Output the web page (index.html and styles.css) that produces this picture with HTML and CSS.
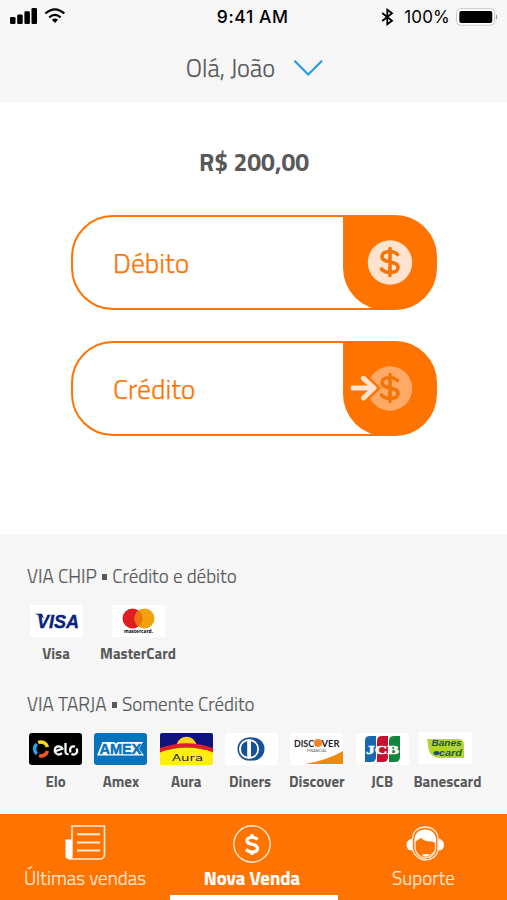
FILE: index.html
```html
<!DOCTYPE html>
<html lang="pt-BR">
<head>
    <meta charset="UTF-8">
    <meta name="viewport" content="width=device-width, initial-scale=1.0">
    <title>Nova Venda</title>
    <link rel="stylesheet" href="styles.css">
</head>
<body>
    <header class="header">
        <div class="status">
            <div class="status-left">
                <svg width="56" height="20" viewBox="0 0 56 20">
                    <rect x="0" y="12" width="5.5" height="7" rx="1.3"/>
                    <rect x="7.2" y="9.5" width="5.5" height="9.5" rx="1.3"/>
                    <rect x="14.4" y="6.3" width="5.5" height="12.7" rx="1.3"/>
                    <rect x="21.5" y="3" width="5.5" height="16" rx="1.3"/>
                    <path d="M35.3 8.5Q45 .1 54.3 8.5M39.2 12.4Q45 7.4 50.6 12.4" fill="none" stroke="#000" stroke-width="2.2"/>
                    <path d="M41.8 14.8Q45 12.4 48 14.8L45 18z"/>
                </svg>
            </div>
            <span class="clock">9:41 AM</span>
            <div class="status-right">
                <svg width="13" height="18" viewBox="0 0 13 18">
                    <path d="M1.2 5L11 12.8L6.3 16.3V1.7L11 5.2L1.2 13" fill="none" stroke="#000" stroke-width="1.8"/>
                </svg>
                <span class="percent">100%</span>
                <svg width="43" height="18" viewBox="0 0 43 18">
                    <rect x=".6" y=".6" width="38" height="16.6" rx="4" fill="#fff" stroke="#c9c9c9"/>
                    <rect x="3.3" y="3" width="33" height="12" rx="2"/>
                    <path d="M40 6q2.5 3 0 6z" fill="#999"/>
                </svg>
            </div>
        </div>
        <div class="user">
            <span class="user-name">Olá, João</span>
            <svg width="30" height="18" viewBox="0 0 30 18">
                <path d="M1.5 1.8L15.2 15.6L29 1.8" fill="none" stroke="#1f9bea" stroke-width="2.1"/>
            </svg>
        </div>
    </header>

    <main class="sale">
        <h1 class="amount">R$ 200,00</h1>
        <button class="option">
            <span class="option-label">Débito</span>
            <span class="option-icon">
                <svg width="94" height="94" viewBox="0 0 94 94">
                    <circle cx="47" cy="47.5" r="22.2" fill="#ffe3cf"/>
                    <path d="M54.5 39.5Q51.5 36.5 47 36.5C42 36.5 39 38.5 39 41.5C39 45 42 46 47 47C52 48 55 49 55 52.5C55 56 52 57.5 47 57.5Q41.5 57.5 38.5 54M47 33.5V60.5" fill="none" stroke="#f47408" stroke-width="3.6" stroke-linecap="round"/>
                </svg>
            </span>
        </button>
        <button class="option">
            <span class="option-label">Crédito</span>
            <span class="option-icon">
                <svg width="94" height="94" viewBox="0 0 94 94">
                    <circle cx="47" cy="47.5" r="22.2" fill="#ffa966"/>
                    <path d="M54.5 39.5Q51.5 36.5 47 36.5C42 36.5 39 38.5 39 41.5C39 45 42 46 47 47C52 48 55 49 55 52.5C55 56 52 57.5 47 57.5Q41.5 57.5 38.5 54M47 33.5V60.5" fill="none" stroke="#f47408" stroke-width="3.6" stroke-linecap="round"/>
                    <path d="M22 36.5L33 47L22 58" fill="none" stroke="#ff7300" stroke-width="7"/>
                    <path d="M10 47H31M20.5 37.3L31 47L20.5 57" fill="none" stroke="#ffe3cf" stroke-width="5" stroke-linecap="round" stroke-linejoin="round"/>
                </svg>
            </span>
        </button>
    </main>

    <section class="cards">
        <h2 class="cards-title">VIA CHIP <i class="dot"></i> Crédito e débito</h2>
        <div class="chip-row">
            <div class="card">
                <svg class="logo" viewBox="0 0 53 32">
                    <rect width="53" height="32" rx="2" fill="#fff"/>
                    <text x="7" y="22.8" class="visa" textLength="42" lengthAdjust="spacingAndGlyphs">VISA</text>
                    <path d="M4.5 8.8H12l2 5Q10 10 4.5 8.8z" fill="#0b2280"/>
                </svg>
                <span>Visa</span>
            </div>
            <div class="card">
                <svg class="logo" viewBox="0 0 53 32">
                    <rect width="53" height="32" rx="2" fill="#fff"/>
                    <circle cx="20.5" cy="13.5" r="10" fill="#e01e20"/>
                    <circle cx="32.5" cy="13.5" r="10" fill="#f0a30a"/>
                    <path d="M26.5 5.5a10 10 0 0 1 0 16a10 10 0 0 1 0-16z" fill="#ed7410"/>
                    <text x="12" y="28" class="mastercard" textLength="29" lengthAdjust="spacingAndGlyphs">mastercard.</text>
                </svg>
                <span>MasterCard</span>
            </div>
        </div>

        <h2 class="cards-title stripe-title">VIA TARJA <i class="dot"></i> Somente Crédito</h2>
        <div class="stripe-row">
            <div class="card">
                <svg class="logo" viewBox="0 0 53 32">
                    <rect width="53" height="32" rx="3"/>
                    <g fill="none" stroke-width="3.5">
                        <path d="M9.2 9.7A6.7 6.7 0 0 1 18.5 14" stroke="#ffda20"/>
                        <path d="M7.8 21A6.7 6.7 0 0 1 7.8 11" stroke="#20a8df"/>
                        <path d="M18.5 18A6.7 6.7 0 0 1 10 22.6" stroke="#f05a22"/>
                    </g>
                    <g fill="none" stroke="#fff" stroke-width="2.2">
                        <path d="M25.5 18.5L33.5 15.7Q32 12.8 28.8 13.4C25.5 14 24.7 18.5 27.3 20.5Q30 22.8 33 20.2"/>
                        <path d="M36.5 10V18.5Q36.5 21.5 39.5 21"/>
                        <path d="M41.5 19.5C40 14.5 43 12.8 46 13.6M47.5 15.5C49.5 19.5 46 23 42.5 20.8"/>
                    </g>
                </svg>
                <span>Elo</span>
            </div>
            <div class="card">
                <svg class="logo" viewBox="0 0 53 32">
                    <rect width="53" height="32" rx="3" fill="#0872ba"/>
                    <path d="M3 22.5L8.5 9H20l2 1.5L24 9H49l-4 6.8L50 22.5H3z" fill="#fff"/>
                    <text x="5.5" y="21.3" class="amex" textLength="42" lengthAdjust="spacingAndGlyphs">AMEX</text>
                </svg>
                <span>Amex</span>
            </div>
            <div class="card">
                <svg class="logo" viewBox="0 0 53 32">
                    <rect width="53" height="32" rx="2" fill="#ffee08"/>
                    <path d="M0 17V2q0-2 2-2h49q2 0 2 2v15z" fill="#11137c"/>
                    <path d="M16 13C19 .5 34 .5 37 13z" fill="#ffd51c"/>
                    <path d="M0 15Q26.5 5.5 53 15v4.5Q26.5 9.5 0 19.5z" fill="#e21f24"/>
                    <path d="M0 19.5Q26.5 9.5 53 19.5z" fill="#ffee08"/>
                    <text x="12" y="27.5" class="aura" textLength="31" lengthAdjust="spacingAndGlyphs">Aura</text>
                </svg>
                <span>Aura</span>
            </div>
            <div class="card">
                <svg class="logo" viewBox="0 0 53 32">
                    <rect width="53" height="32" rx="2" fill="#fff"/>
                    <path d="M24 4.5H28a11.5 11.5 0 0 1 0 23H24z" fill="#17519c"/>
                    <circle cx="24" cy="16" r="10.8" fill="#fff" stroke="#17519c" stroke-width="1.5"/>
                    <path d="M22.2 8.2a8 8 0 0 0 0 15.6zM26 8.2a8 8 0 0 1 0 15.6z" fill="#17519c"/>
                </svg>
                <span class="diners-label">Diners</span>
            </div>
            <div class="card">
                <svg class="logo" viewBox="0 0 53 32">
                    <rect width="53" height="32" rx="2" fill="#fff"/>
                    <text x="4" y="13.5" class="discover" textLength="20" lengthAdjust="spacingAndGlyphs">DISC</text>
                    <circle cx="28" cy="10" r="4" fill="#f58220"/>
                    <text x="31.5" y="13.5" class="discover" textLength="18" lengthAdjust="spacingAndGlyphs">VER</text>
                    <text x="17" y="18.5" class="tiny" textLength="20" lengthAdjust="spacingAndGlyphs">FINANCIAL</text>
                    <path d="M15 31Q38 27 53 18V31z" fill="#f08a0c"/>
                </svg>
                <span>Discover</span>
            </div>
            <div class="card">
                <svg class="logo" viewBox="0 0 53 32">
                    <rect width="53" height="32" rx="2" fill="#fff"/>
                    <path d="M9 8q0-5 5-5h6v21q0 5-5 5H9z" fill="#1766ae"/>
                    <path d="M21 8q0-5 5-5h6v21q0 5-5 5H21z" fill="#c41230"/>
                    <path d="M33 8q0-5 5-5h6v21q0 5-5 5H33z" fill="#148541"/>
                    <text x="10" y="20.5" class="jcb" textLength="33" lengthAdjust="spacingAndGlyphs">JCB</text>
                </svg>
                <span>JCB</span>
            </div>
            <div class="card">
                <svg class="logo banescard" viewBox="0 0 53 32">
                    <rect width="53" height="32" rx="2" fill="#fff"/>
                    <path d="M8 7H39q6 0 6 6V26H22Q9 26 9 12z" fill="#b4d334"/>
                    <text x="12.5" y="14.2" class="banes" textLength="30" lengthAdjust="spacingAndGlyphs">Banes</text>
                    <text x="20" y="24" class="banes" textLength="23" lengthAdjust="spacingAndGlyphs">card</text>
                    <ellipse cx="17.5" cy="21" rx="3" ry="2" fill="#174f8c"/>
                </svg>
                <span>Banescard</span>
            </div>
        </div>
    </section>

    <nav class="tabs">
        <a class="tab">
            <svg width="42" height="38" viewBox="0 0 42 38">
                <path d="M8 1H40.5V29q0 5-5 5H6.5Q8 33 8 30z" fill="none" stroke="#ffe9d6" stroke-width="1.6"/>
                <path d="M1.5 14.5H8V31q0 3-3.2 3t-3.3-3z" fill="#fff"/>
                <path d="M13 9.2H36M13 17.5H36M13 25.5H36" stroke="#ffe9d6" stroke-width="1.9"/>
            </svg>
            <span class="tab-label">Últimas vendas</span>
        </a>
        <a class="tab active">
            <svg width="40" height="38" viewBox="0 0 40 38">
                <circle cx="20" cy="19" r="18.2" fill="none" stroke="#ffe9d6" stroke-width="1.4"/>
                <path d="M25.5 14.5Q23.5 12.5 20 12.5C16.5 12.5 15 13.5 15 15.5C15 18 17 18.500 20 19.200C23.500 20 25.500 21 25.500 23.500C25.500 26 23 27 20 27Q16.500 27 14 24.500M20 9V12.500M20 27V30" fill="none" stroke="#fff" stroke-width="3.200"/>
            </svg>
            <span class="tab-label">Nova Venda</span>
        </a>
        <a class="tab support">
            <svg width="40" height="38" viewBox="0 0 40 38">
                <path d="M8.5 13.5Q1.5 14 1.5 20t7 5.5zM32 13.5Q39 14 39 20t-7 5.5z" fill="#fff"/>
                <path d="M7.5 23V14C7.5-2 33-2 33 14v10c0 7-7 11-12.7 11S7.5 29 7.5 23z" fill="#ff7300" stroke="#ffe9d6" stroke-width="1.3"/>
                <path d="M10 23V15C10 1.5 30.5 1.5 30.5 15v9c0 5-5.5 9-10.2 9S10 28.5 10 23z" fill="none" stroke="#ffe9d6" stroke-width="1.3"/>
                <path d="M10 17V14C10 1.5 30.5 1.5 30.5 14V18L27 16.5Q20 17 16 13Q14 14 10 17z" fill="#fff"/>
                <path d="M30 25Q28 30 22 30.5" fill="none" stroke="#ffe9d6" stroke-width="1"/>
                <ellipse cx="20.5" cy="30.3" rx="3.2" ry="1.3" fill="#fff"/>
            </svg>
            <span class="tab-label">Suporte</span>
        </a>
    </nav>
</body>
</html>
```
FILE: styles.css
```css
:root {
    --orange: #ff7300;
    --grey-bg: #f6f6f6;
    --text: #58595b;
}
* {
    box-sizing: border-box;
}
body {
    margin: 0;
    height: 900px;
    display: flex;
    flex-direction: column;
    overflow: hidden;
    background: #fff;
    color: var(--text);
    font-family: "Titillium Web", Roboto, "Open Sans", sans-serif;
}
svg {
    display: block;
    flex: none;
}
.header {
    height: 102px;
    background: var(--grey-bg);
}
.status {
    height: 33px;
    display: grid;
    grid-template-columns: 1fr auto 1fr;
    align-items: center;
    padding: 0 8px 0 9.5px;
    color: #000;
    font-family: Inter, sans-serif;
    font-size: 17px;
}
.status-left {
    margin-top: -4px;
}
.clock {
    margin-right: 3px;
    font-weight: 500;
    font-size: 17.5px;
    letter-spacing: .6px;
}
.status-right {
    display: flex;
    align-items: center;
    justify-content: flex-end;
}
.percent {
    margin: 0 6px 0 10px;
    letter-spacing: .2px;
}
.user {
    height: 69px;
    display: flex;
    align-items: center;
    justify-content: center;
    gap: 18px;
    padding-left: 2px;
}
.user-name {
    font-size: 24.5px;
    font-weight: 300;
    -webkit-text-stroke: .25px;
}
.sale {
    height: 432px;
    display: flex;
    flex-direction: column;
    align-items: center;
    padding: 45px 0 0 1px;
}
.amount {
    margin: 0 0 37px;
    height: 31px;
    line-height: 31px;
    font-size: 24.7px;
    font-weight: 700;
}
.option {
    width: 366px;
    height: 95px;
    margin-bottom: 31px;
    padding: 0 0 0 40px;
    display: flex;
    justify-content: space-between;
    align-items: center;
    border: 2px solid var(--orange);
    border-radius: 42px;
    /* orange end cap runs under the border */
    background: linear-gradient(to right, #fff 320px, var(--orange) 320px) border-box;
    color: var(--orange);
    font-family: inherit;
    overflow: hidden;
    cursor: pointer;
}
.option-label {
    font-size: 27.7px;
    font-weight: 300;
    -webkit-text-stroke: .25px;
}
.option-icon {
    width: 94px;
    height: 95px;
    flex: none;
    margin-right: -2px;
    background: var(--orange);
    border-bottom-left-radius: 42px;
}
.cards {
    height: 280px;
    padding: 27px 23px 0;
    background: var(--grey-bg);
}
.cards-title {
    margin: 0;
    padding-left: 4px;
    height: 30px;
    line-height: 29px;
    font-size: 19px;
    font-weight: 300;
    white-space: nowrap;
    -webkit-text-stroke: .2px;
}
.dot {
    display: inline-block;
    width: 5px;
    height: 6px;
    margin: 0 1px 3px;
    background: var(--text);
}
.chip-row {
    display: grid;
    grid-template-columns: 66px 98px;
    margin-top: 14px;
}
.stripe-title {
    margin-top: 25px;
}
.stripe-row {
    display: grid;
    grid-template-columns: repeat(7, 65.3px);
    margin-top: 14px;
}
.card {
    display: flex;
    flex-direction: column;
    align-items: center;
    font-size: 15px;
    font-weight: 700;
    line-height: 20px;
    white-space: nowrap;
}
.card span {
    margin-top: 7px;
}
.diners-label {
    margin-right: 3px;
}
.logo {
    width: 53px;
    height: 32px;
}
.banescard {
    margin: -1px 3px 1px 0;
}
.visa {
    font: italic 700 19px "Liberation Sans", sans-serif;
    fill: #0b2280;
    stroke: #0b2280;
    stroke-width: .4px;
}
.mastercard {
    font: 700 5px "Open Sans", sans-serif;
}
.amex {
    font: 700 15px "Liberation Sans", sans-serif;
    fill: #0872ba;
    stroke: #0872ba;
    stroke-width: .5px;
}
.aura {
    font: 9.5px "DejaVu Sans", sans-serif;
    fill: #16205a;
}
.discover {
    font: 700 10px Lato, sans-serif;
    fill: #222;
}
.tiny {
    font: 3px Roboto, sans-serif;
    fill: #555;
}
.jcb {
    font: 700 12px "Liberation Serif", serif;
    fill: #fff;
    stroke: #fff;
    stroke-width: .5px;
}
.banes {
    font: italic 700 8.5px "Liberation Sans", sans-serif;
    fill: #1e4f52;
}
.tabs {
    height: 86px;
    display: grid;
    grid-template-columns: 170px 168px 169px;
    background: var(--orange);
    color: #ffe9d6;
}
.tab {
    display: flex;
    flex-direction: column;
    align-items: center;
    padding-top: 11px;
}
.tab-label {
    margin-top: 3px;
    line-height: 24px;
    font-size: 19px;
    font-weight: 300;
    white-space: nowrap;
    -webkit-text-stroke: .2px;
}
.active {
    padding-right: 4px;
    border-bottom: 5px solid #fff;
    color: #fff;
}
.active .tab-label {
    font-size: 18.8px;
    font-weight: 700;
}
.support {
    padding-left: 2px;
}
.support svg {
    margin-left: 3px;
}
```
